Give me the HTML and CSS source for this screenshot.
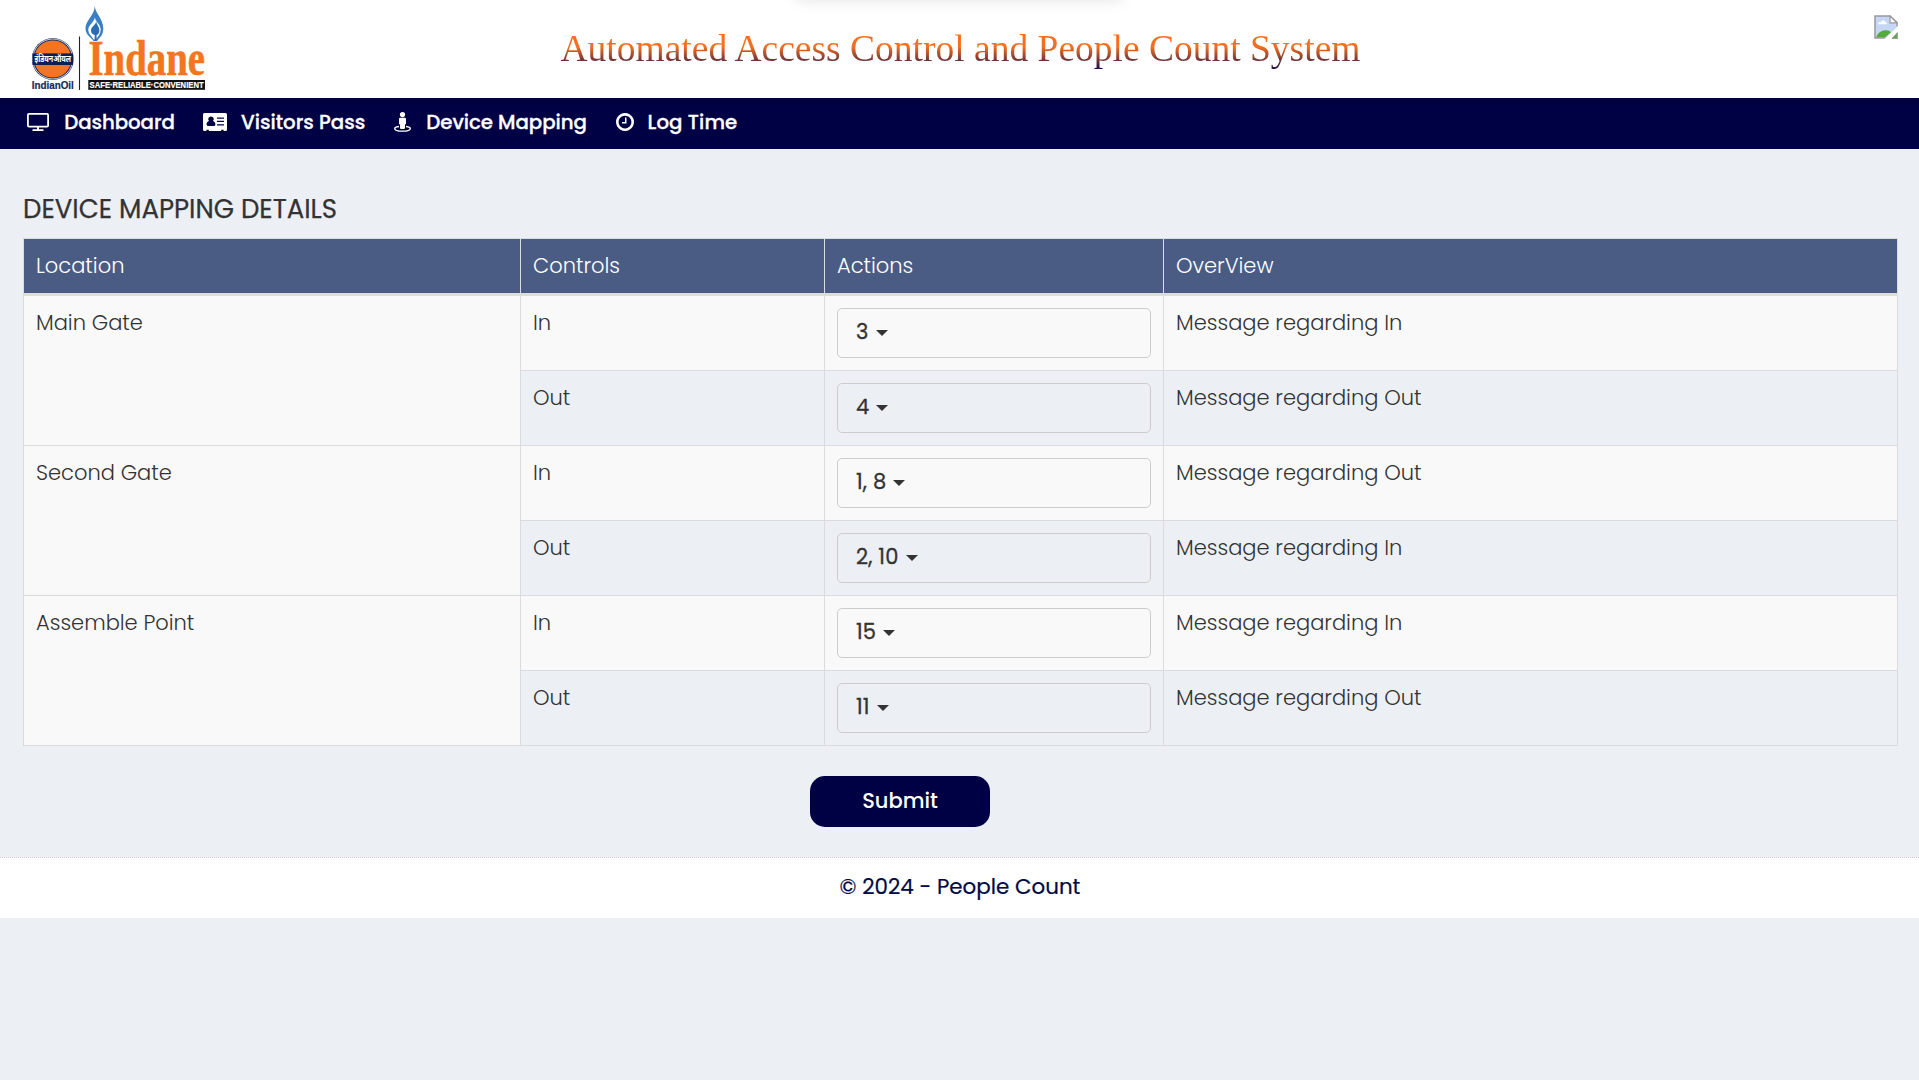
FILE: index.html
```html
<!DOCTYPE html>
<html lang="en">
<head>
<meta charset="utf-8">
<title>Device Mapping - People Count</title>
<link rel="stylesheet" href="styles.css">
</head>
<body>
<div class="top-shadow"></div>
<header class="header">
  <svg class="logo" width="184" height="98" viewBox="28 0 184 98" role="img" aria-label="IndianOil Indane">
    <circle cx="52.8" cy="59" r="20.9" fill="#17285c"/>
    <circle cx="52.8" cy="59" r="20" fill="none" stroke="#fff" stroke-width=".8"/>
    <circle cx="52.8" cy="59" r="18.6" fill="#f37421"/>
    <rect x="32.6" y="53.4" width="40.4" height="11.6" fill="#0b1f52"/>
    <text class="logo-hindi" x="34.5" y="62.3" textLength="36.5" lengthAdjust="spacingAndGlyphs">इंडियनऑयल</text>
    <text class="logo-oil" x="31.8" y="89" textLength="42" lengthAdjust="spacingAndGlyphs">IndianOil</text>
    <path d="M79.5 36.5V90" stroke="#222" stroke-width="1.1"/>
    <path d="M94.7 6c.5 7 8.600 13 8.600 22.400 0 6.800-3.600 8.900-6.300 12.600h-3.400C91.500 37.300 85.500 35 85.500 28.400 85.500 20.500 94.700 15 94.700 6z" fill="#3a7fc3"/>
    <path d="M94.800 17.300c.4 4.500 5.900 7 5.900 12.500 0 3.700-2 5.600-4.500 9.800h-2.600c-1.500-3.600-5.300-5.300-5.300-9.800 0-5 6.200-7.500 6.500-12.500z" fill="#fff"/>
    <path d="M96.200 21.800c.7 3.200 3.200 5.100 3.200 8.700 0 2.600-1.200 4-2.900 4.600l.4 5.600h-2.400l.3-5.600c-2.300-.6-3.800-2-3.800-4.600 0-3.600 4.400-5.500 5.200-8.700z" fill="#2a6db5"/>
    <text class="logo-name" x="88.500" y="75.300" textLength="116.500" lengthAdjust="spacingAndGlyphs">Indane</text>
    <rect x="88.300" y="80" width="116.700" height="9.800" fill="#111"/>
    <text class="logo-tag" x="89.600" y="88.200" textLength="114" lengthAdjust="spacingAndGlyphs">SAFE·RELIABLE·CONVENIENT</text>
  </svg>
  <h1 class="title">Automated Access Control and People Count System</h1>
  <svg class="missing" width="24" height="24" viewBox="0 0 24 24">
    <path d="M1 1h15l7 7v4L12 23H1z" fill="#c6d7f5"/>
    <path d="M4 9.200c0-1.700 1.700-2.500 2.900-2 .8-2.300 3.900-2.200 4.500.1 1.500.1 1.900 1.100 1.700 1.900z" fill="#fff"/>
    <path d="M2 22.500c2-5.500 7-8.500 12-6.900 1.500.4 2.400 1 3 1.700L11 22.500z" fill="#53ab3b"/>
    <path d="M23 11.500V7.500L16 1H1v22h10" fill="none" stroke="#999" stroke-width="1.500"/>
    <path d="M16 1v6.800h7z" fill="#fff" stroke="#999" stroke-width="1.200"/>
    <path d="M18 23.200h5.200V17.500z" fill="#53ab3b"/>
    <path d="M18 23.300h5.300V17.500" fill="none" stroke="#999" stroke-width="1.200"/>
  </svg>
</header>
<nav class="nav">
  <a class="nav-item">
    <svg class="ico-monitor" width="22" height="18" viewBox="0 0 22 18"><path d="M1.900.9h18.200q1 0 1 1v10.700q0 1-1 1H1.900q-1 0-1-1V1.900q0-1 1-1z" fill="none" stroke="#fff" stroke-width="1.800"/><path d="M10 14h2v2.300h4.500V18h-11v-1.700H10z" fill="#fff"/></svg>
    <span>Dashboard</span></a>
  <a class="nav-item">
    <svg class="ico-card" width="24" height="18" viewBox="0 0 24 18"><path fill="#fff" fill-rule="evenodd" d="M1.500 0h21Q24 0 24 1.500v15q0 1.500-1.500 1.500H20.600v-1.200h-2.400V18H5.800v-1.200H3.400V18H1.500Q0 18 0 16.500v-15Q0 0 1.500 0zM8 3.400a2.600 2.700 0 0 0-2 4.600C4.400 8.400 3.600 9.600 3.600 11.500q0 1.400 1.300 1.400h6.200q1.300 0 1.300-1.400c0-1.900-.8-3.100-2.400-3.500A2.600 2.700 0 0 0 8 3.400zM14 4.500h7v1.200h-7zM14 7.800h7V9h-7zM14 11.200h7v1.200h-7z"/></svg>
    <span>Visitors Pass</span></a>
  <a class="nav-item">
    <svg class="ico-person" width="17" height="20" viewBox="0 0 17 20"><circle cx="8.500" cy="2.600" r="2.600" fill="#fff"/><path d="M6.400 5.700h4.200q1.400 0 1.400 1.400v4.600q0 .8-1 .8v3.600q0 .8-.8.8H6.800q-.8 0-.8-.8v-3.600q-1 0-1-.8V7.100q0-1.400 1.400-1.400z" fill="#fff"/><path d="M5 14.500c-2.800.4-4.300 1-4.300 1.900 0 1.600 3.500 2.700 7.800 2.700s7.800-1.100 7.800-2.700c0-.9-1.500-1.500-4.300-1.900" fill="none" stroke="#fff" stroke-width="1.400"/></svg>
    <span>Device Mapping</span></a>
  <a class="nav-item">
    <svg class="ico-clock" width="18" height="18" viewBox="0 128 1536 1536"><path fill="#fff" d="M896 544v448q0 14-9 23t-23 9h-320q-14 0-23-9t-9-23v-64q0-14 9-23t23-9h224v-352q0-14 9-23t23-9h64q14 0 23 9t9 23zm416 352q0-148-73-273t-198-198-273-73-273 73-198 198-73 273 73 273 198 198 273 73 273-73 198-198 73-273zm224 0q0 209-103 385.500t-279.500 279.500-385.500 103-385.500-103-279.500-279.500-103-385.500 103-385.500 279.500-279.500 385.500-103 385.500 103 279.500 279.500 103 385.500z"/></svg>
    <span>Log Time</span></a>
</nav>
<main class="main">
  <h2 class="heading">DEVICE MAPPING DETAILS</h2>
  <table class="table">
    <colgroup><col class="c-location"><col class="c-controls"><col class="c-actions"><col class="c-overview"></colgroup>
    <thead><tr><th>Location</th><th>Controls</th><th>Actions</th><th>OverView</th></tr></thead>
    <tbody>
      <tr class="odd"><td rowspan="2">Main Gate</td><td>In</td><td class="action"><div class="select">3<i class="caret"></i></div></td><td>Message regarding In</td></tr>
      <tr><td>Out</td><td class="action"><div class="select">4<i class="caret"></i></div></td><td>Message regarding Out</td></tr>
      <tr class="odd"><td rowspan="2">Second Gate</td><td>In</td><td class="action"><div class="select">1, 8<i class="caret"></i></div></td><td>Message regarding Out</td></tr>
      <tr><td>Out</td><td class="action"><div class="select">2, 10<i class="caret"></i></div></td><td>Message regarding In</td></tr>
      <tr class="odd"><td rowspan="2">Assemble Point</td><td>In</td><td class="action"><div class="select">15<i class="caret"></i></div></td><td>Message regarding In</td></tr>
      <tr><td>Out</td><td class="action"><div class="select">11<i class="caret"></i></div></td><td>Message regarding Out</td></tr>
    </tbody>
  </table>
  <button class="submit">Submit</button>
</main>
<footer class="footer">© 2024 - People Count</footer>
</body>
</html>
```
FILE: styles.css
```css
* { box-sizing: border-box; }
body { margin: 0; background: #ecf0f5; color: #333; font: 300 21px/30px Poppins, Inter, sans-serif; }

.top-shadow { position: absolute; top: -20px; left: 796px; width: 326px; height: 17px; box-shadow: 0 2px 16px rgba(0, 0, 0, .13); }

.header { display: grid; grid-template-columns: 184px 1fr 184px; height: 98px; padding: 0 21px 0 28px; background: #fff; }
.logo { display: block; }
.logo-hindi { font: 700 9px "Noto Sans Devanagari", "Noto Sans", sans-serif; fill: #fff; }
.logo-oil { font: 700 10px "Liberation Sans", sans-serif; fill: #17285c; stroke: #17285c; stroke-width: .2px; }
.logo-name { font: 700 51px "Liberation Serif", serif; fill: #f37421; stroke: #f37421; stroke-width: .6px; }
.logo-tag { font: 700 9.500px "Liberation Sans Narrow", "Liberation Sans", sans-serif; fill: #fff; stroke: #fff; stroke-width: .2px; }
.title { margin: 28px 0 0 -5px; height: 42px; font: 400 37.500px/42px "Liberation Serif", serif; text-align: center; white-space: nowrap; color: transparent; background: linear-gradient(#ff6d1a 15%, #f37021 45%, #00004d 105%); -webkit-background-clip: text; background-clip: text; }
.missing { justify-self: end; margin-top: 15px; }

.nav { display: grid; grid-template-columns: 176px 191px 221.500px auto; height: 51px; padding: 0 27px; background: #000045; color: #fff; font-size: 19.800px; font-weight: 500; -webkit-text-stroke: .3px #fff; }
.nav-item { display: flex; align-items: center; height: 48px; white-space: nowrap; }
.ico-monitor { margin-right: 15.300px; }
.ico-card { margin-right: 14px; }
.ico-person { margin-right: 15.300px; }
.ico-clock { margin-right: 14px; }
.nav-item:nth-child(1) { letter-spacing: -.1px; }
.nav-item:nth-child(3) { letter-spacing: -.05px; }
.nav-item:nth-child(4) { letter-spacing: .1px; }

.main { height: 708px; padding: 42px 20px 0 23px; }
.heading { margin: 0 0 11px; font-size: 26px; line-height: 36px; font-weight: 400; -webkit-text-stroke: .25px #333; }
.table { width: 1875px; table-layout: fixed; border-collapse: separate; border-spacing: 0; border: solid #d9dbde; border-width: 1px 0 0 1px; }
.c-location { width: 497px; }
.c-controls { width: 304px; }
.c-actions { width: 339px; }
.c-overview { width: 734px; }
th { height: 57px; padding: 0 12px; border: solid #ddd; border-width: 0 1px 3px 0; background: #4a5c84; color: #fff; font-weight: 300; text-align: left; }
td { height: 75px; padding: 12px 12px 0; border: solid #d9dbde; border-width: 0 1px 1px 0; vertical-align: top; }
.odd td { background: #f9f9f9; }
.select { display: flex; align-items: center; height: 50px; padding: 0 18px 2px; border: 1px solid #ccc; border-radius: 5px; font-weight: 400; letter-spacing: .15px; -webkit-text-stroke: .3px #333; }
.caret { margin: 1px 0 0 7px; border: 6px solid transparent; border-top-color: #333; border-bottom: 0; }
.submit { display: block; width: 180px; height: 51px; margin: 30px 0 0 787px; padding: 0 0 2px; border: 0; border-radius: 15px; background: #000045; color: #fff; font: inherit; font-weight: 500; }

.footer { height: 61px; padding-left: 1px; border-top: 1px dotted #ccc; background: #fff; color: #000b45; font-size: 21.400px; font-weight: 400; line-height: 58px; text-align: center; -webkit-text-stroke: .2px #000b45; }
```
